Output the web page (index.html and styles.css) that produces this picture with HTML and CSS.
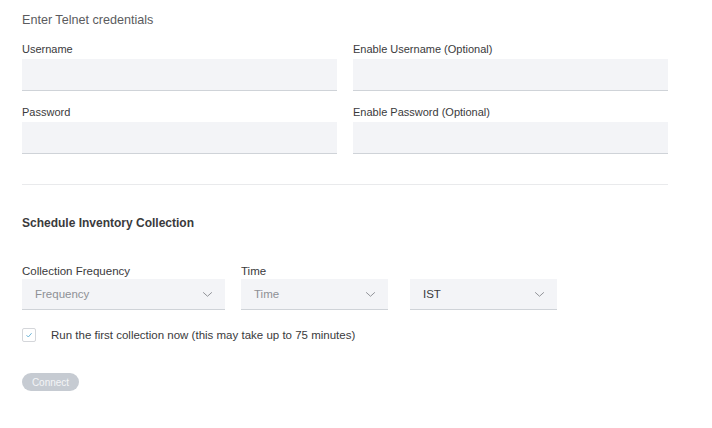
FILE: index.html
```html
<!DOCTYPE html>
<html lang="en">
<head>
    <meta charset="UTF-8">
    <meta name="viewport" content="width=device-width, initial-scale=1.0">
    <title>Telnet credentials</title>
    <link rel="stylesheet" href="styles.css">
</head>
<body>
    <div class="page">
        <div class="intro">Enter Telnet credentials</div>
        <div class="grid">
            <div class="field">
                <label>Username</label>
                <div class="input"></div>
            </div>
            <div class="field">
                <label>Enable Username (Optional)</label>
                <div class="input"></div>
            </div>
            <div class="field">
                <label>Password</label>
                <div class="input"></div>
            </div>
            <div class="field">
                <label>Enable Password (Optional)</label>
                <div class="input"></div>
            </div>
        </div>
        <div class="divider"></div>
        <h2 class="section">Schedule Inventory Collection</h2>
        <div class="schedule">
            <div class="field freq">
                <label>Collection Frequency</label>
                <div class="select placeholder">Frequency
                    <svg class="chev" viewBox="0 0 12 8"><path d="M1 1.5 L6 6 L11 1.5" /></svg>
                </div>
            </div>
            <div class="field time">
                <label>Time</label>
                <div class="select placeholder">Time
                    <svg class="chev" viewBox="0 0 12 8"><path d="M1 1.5 L6 6 L11 1.5" /></svg>
                </div>
            </div>
            <div class="field zone">
                <label>&nbsp;</label>
                <div class="select">IST
                    <svg class="chev" viewBox="0 0 12 8"><path d="M1 1.5 L6 6 L11 1.5" /></svg>
                </div>
            </div>
        </div>
        <div class="check-row">
            <span class="checkbox">
                <svg viewBox="0 0 10 10"><path d="M2.5 5.2 L4.3 7 L7.6 3.2" /></svg>
            </span>
            <span class="check-text">Run the first collection now (this may take up to 75 minutes)</span>
        </div>
        <button class="connect" disabled>Connect</button>
    </div>
</body>
</html>
```

FILE: styles.css
```css
* {
    margin: 0;
    padding: 0;
    box-sizing: border-box;
}
body {
    background-color: #fff;
    font-family: "Liberation Sans", Arial, sans-serif;
    color: #3a3a3c;
}
.page {
    width: 668px;
    padding: 13px 0 0 22px;
}
.intro {
    font-size: 12.6px;
    line-height: 14px;
    color: #5b5b5e;
    margin-bottom: 16px;
}
.grid {
    display: grid;
    grid-template-columns: 315px 315px;
    column-gap: 16px;
    row-gap: 15px;
}
.field label {
    display: block;
    font-size: 11px;
    line-height: 13px;
    color: #3a3a3c;
    margin-bottom: 3px;
}
.input {
    height: 32px;
    background-color: #f3f4f7;
    border-bottom: 1px solid #cfd3d8;
}
.divider {
    height: 1px;
    background-color: #e9eaec;
    margin-top: 30px;
}
.section {
    font-size: 12px;
    line-height: 14px;
    font-weight: bold;
    color: #3a3a3c;
    margin-top: 31px;
}
.schedule {
    display: flex;
    margin-top: 35px;
}
.schedule .field label {
    font-size: 11.5px;
    margin-bottom: 1px;
}
.freq {
    width: 203px;
    margin-right: 16px;
}
.time {
    width: 147px;
    margin-right: 22px;
}
.zone {
    width: 147px;
}
.select {
    height: 31px;
    background-color: #f3f4f7;
    border-bottom: 1px solid #cfd3d8;
    display: flex;
    align-items: center;
    justify-content: space-between;
    padding: 0 12px 0 13px;
    font-size: 11.5px;
    color: #3a3a3c;
}
.select.placeholder {
    color: #8e9095;
}
.chev {
    width: 11px;
    height: 7px;
    fill: none;
    stroke: #8e9095;
    stroke-width: 1.1;
}
.check-row {
    display: flex;
    align-items: center;
    margin-top: 18px;
}
.checkbox {
    width: 14px;
    height: 14px;
    border: 1px solid #d4d6da;
    border-radius: 2px;
    background-color: #fff;
    display: flex;
    align-items: center;
    justify-content: center;
    margin-right: 15px;
}
.checkbox svg {
    width: 10px;
    height: 10px;
    fill: none;
    stroke: #6fb6d8;
    stroke-width: 1;
}
.check-text {
    font-size: 11.5px;
    color: #3a3a3c;
}
.connect {
    display: block;
    margin-top: 31px;
    width: 57px;
    height: 18px;
    border: none;
    border-radius: 9px;
    background-color: #c6cbd2;
    color: #f4f5f7;
    font-family: "Liberation Sans", Arial, sans-serif;
    font-size: 10px;
}
```
